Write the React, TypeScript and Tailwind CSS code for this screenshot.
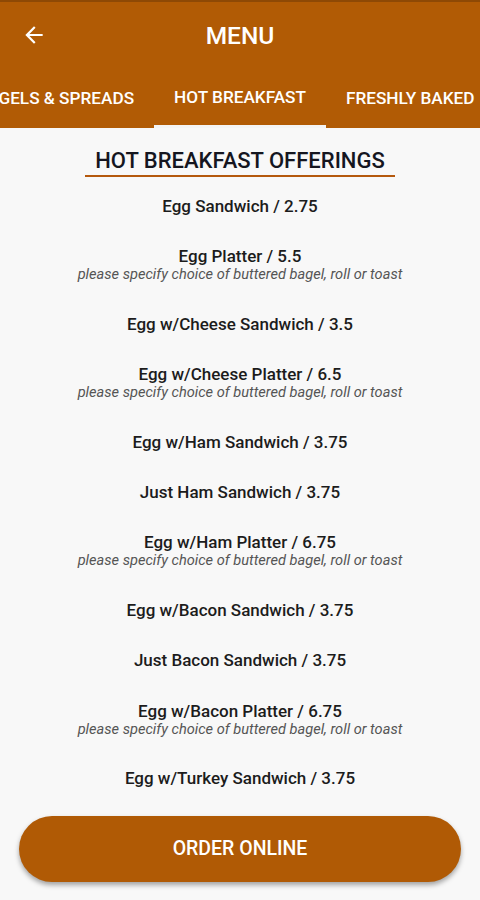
const items: { name: string; note?: string }[] = [
  { name: "Egg Sandwich / 2.75" },
  { name: "Egg Platter / 5.5", note: "please specify choice of buttered bagel, roll or toast" },
  { name: "Egg w/Cheese Sandwich / 3.5" },
  { name: "Egg w/Cheese Platter / 6.5", note: "please specify choice of buttered bagel, roll or toast" },
  { name: "Egg w/Ham Sandwich / 3.75" },
  { name: "Just Ham Sandwich / 3.75" },
  { name: "Egg w/Ham Platter / 6.75", note: "please specify choice of buttered bagel, roll or toast" },
  { name: "Egg w/Bacon Sandwich / 3.75" },
  { name: "Just Bacon Sandwich / 3.75" },
  { name: "Egg w/Bacon Platter / 6.75", note: "please specify choice of buttered bagel, roll or toast" },
  { name: "Egg w/Turkey Sandwich / 3.75" },
];

function BackArrow() {
  return (
    <svg width="26" height="26" viewBox="0 0 24 24" fill="#ffffff">
      <path d="M20 11H7.83l5.59-5.59L12 4l-8 8 8 8 1.41-1.41L7.83 13H20v-2z" />
    </svg>
  );
}

export default function App() {
  return (
    <div className="flex h-[900px] w-[480px] flex-col overflow-hidden bg-[#f8f8f8] font-['Roboto',sans-serif]">
      <header className="bg-[#b15b05]">
        <div className="h-[2px] bg-[#8e4905]" />
        <div className="relative flex h-[68px] items-center justify-center">
          <div className="absolute left-[21px] top-[20px]">
            <BackArrow />
          </div>
          <h1 className="text-[24.5px] font-medium text-white">MENU</h1>
        </div>
        <nav className="grid h-[58px] grid-cols-[1fr_auto_1fr] overflow-hidden text-[17.2px] font-medium text-white">
          <div className="flex justify-end overflow-hidden">
            <div className="flex items-center whitespace-nowrap px-5">BAGELS &amp; SPREADS</div>
          </div>
          <div className="flex flex-col">
            <div className="flex flex-1 items-center justify-center whitespace-nowrap px-5">HOT BREAKFAST</div>
            <div className="h-[3px] bg-[#f4f4f4]" />
          </div>
          <div className="flex justify-start overflow-hidden">
            <div className="flex items-center whitespace-nowrap px-5">FRESHLY BAKED</div>
          </div>
        </nav>
      </header>

      <main className="flex flex-1 flex-col items-center overflow-hidden pt-[20px]">
        <h2 className="border-b-2 border-[#b5590d] px-[10px] pb-[1px] text-[22px] font-medium leading-[26px] text-[#15161f]">
          HOT BREAKFAST OFFERINGS
        </h2>
        <ul className="mt-[19px] flex flex-col items-center gap-[30.4px]">
          {items.map((item) => (
            <li key={item.name} className="flex flex-col items-center">
              <span className="text-[17px] font-medium leading-[20px] text-[#1c1c1c]">{item.name}</span>
              {item.note && (
                <span className="text-[14.6px] italic leading-[17px] text-[#555555]">{item.note}</span>
              )}
            </li>
          ))}
        </ul>
      </main>

      <div className="px-[19px] pb-[18px] pt-2">
        <button className="flex h-[66px] w-full items-center justify-center rounded-full bg-[#b05a05] text-[19.5px] font-medium text-white shadow-[0_3px_5px_rgba(0,0,0,0.35)]">
          ORDER ONLINE
        </button>
      </div>
    </div>
  );
}
